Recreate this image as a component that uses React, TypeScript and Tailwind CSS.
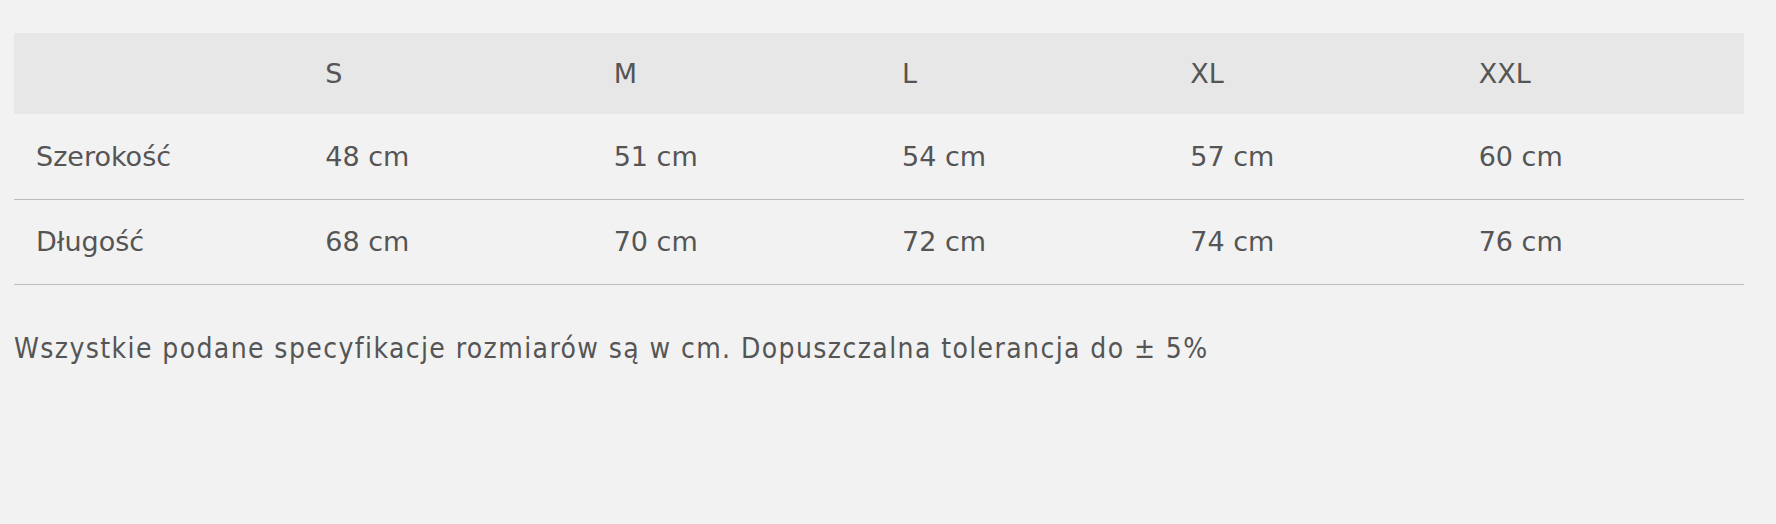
import React from 'react';

const sizes = ['S', 'M', 'L', 'XL', 'XXL'];

const rows = [
  { label: 'Szerokość', values: ['48 cm', '51 cm', '54 cm', '57 cm', '60 cm'] },
  { label: 'Długość', values: ['68 cm', '70 cm', '72 cm', '74 cm', '76 cm'] },
];

const App = () => {
  return (
    <div className="min-h-screen bg-[#f2f2f2] text-[#555555] pt-[33px] pl-[14px]">
      {/* Size chart */}
      <table
        className="w-[1730px] table-fixed border-collapse text-[27px]"
        style={{ fontFamily: '"DejaVu Sans", Verdana, sans-serif' }}
      >
        <thead>
          <tr className="bg-[#e7e7e7] h-[81px]">
            <th className="font-normal text-left pl-[23px] pr-[21px] pt-[2px]"></th>
            {sizes.map((s) => (
              <th key={s} className="font-normal text-left pl-[23px] pr-[21px] pt-[2px]">
                {s}
              </th>
            ))}
          </tr>
        </thead>
        <tbody>
          {rows.map((row) => (
            <tr key={row.label} className="h-[85px] border-b border-[#bdbdbd]">
              <td className="pl-[22px] pr-[22px] pt-[2px]">{row.label}</td>
              {row.values.map((v) => (
                <td key={v} className="pl-[23px] pr-[21px] pt-[2px]">
                  {v}
                </td>
              ))}
            </tr>
          ))}
        </tbody>
      </table>

      <p
        className="mt-[47px] text-[28px] leading-[34px] tracking-[1.4px]"
        style={{ fontFamily: '"DejaVu Sans Condensed", Tahoma, sans-serif' }}
      >
        Wszystkie podane specyfikacje rozmiarów są w cm. Dopuszczalna tolerancja do ± 5%
      </p>
    </div>
  );
};

export default App;
